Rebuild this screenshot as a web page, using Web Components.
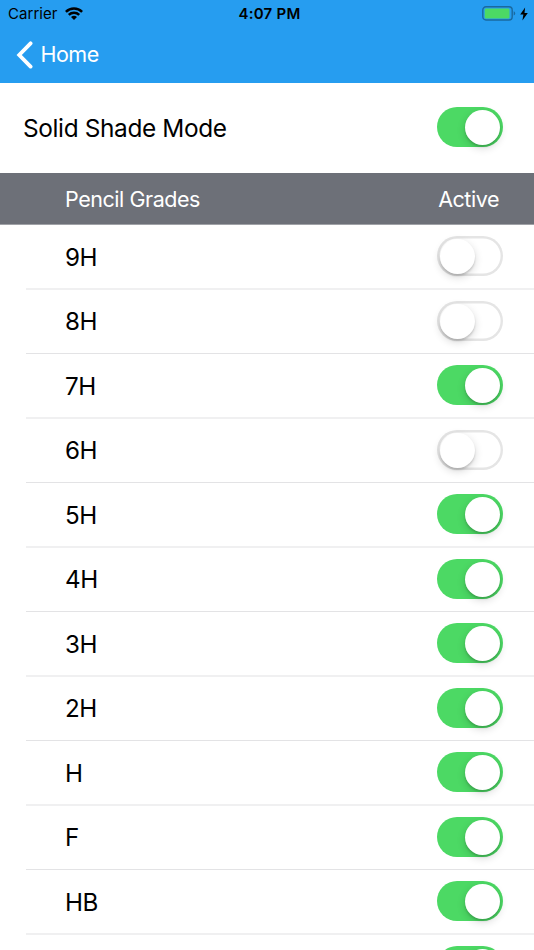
<!DOCTYPE html>
<html lang="en">
<head>
<meta charset="utf-8">
<title>Pencil Grades</title>
<style>
  html, body {
    margin: 0;
    height: 100%;
    overflow: hidden;
    background: #fff;
  }
  body {
    font-family: Inter, "Liberation Sans", sans-serif;
    color: #000;
  }
</style>
</head>
<body>
<grades-screen></grades-screen>

<script>
class StatusBar extends HTMLElement {
    constructor() {
        super();
        this.attachShadow({ mode: 'open' });
    }

    connectedCallback() {
        this.shadowRoot.innerHTML = `
            <style>
                :host {
                    display: grid;
                    grid-template-columns: 1fr auto 1fr;
                    align-items: center;
                    height: 27px;
                    padding: 0 6px 0 8px;
                    font-size: 15px;
                    line-height: 27px;
                }
                .left, .right {
                    display: flex;
                    align-items: center;
                }
                .left { gap: 7px; letter-spacing: 0.05px; }
                .right { justify-content: flex-end; gap: 4px; }
                .time { font-weight: 600; letter-spacing: 0.25px; padding-left: 3px; }
                svg { display: block; }
            </style>
            <div class="left">
                <span>Carrier</span>
                <svg width="18" height="14" viewBox="0 0 18 14" fill="none" stroke="#000" stroke-width="2.5">
                    <path d="M.9 4.8a11.6 11.6 0 0 1 16.2 0"/>
                    <path d="M3.8 7.9a7.4 7.4 0 0 1 10.4 0"/>
                    <path d="M9 13 6 10.1a4.3 4.3 0 0 1 6 0z" fill="#000" stroke="none"/>
                </svg>
            </div>
            <span class="time">4:07 PM</span>
            <div class="right">
                <svg width="34" height="15" viewBox="0 0 34 15">
                    <rect x=".8" y=".8" width="29.4" height="13.2" rx="3.2" fill="none" stroke="#1a699f" stroke-width="1.4"/>
                    <rect x="2.7" y="2.6" width="24.8" height="9.8" rx="1.2" fill="#4cd964"/>
                    <path d="M31.7 5.2q1.5.6 1.5 2.2t-1.5 2.2z" fill="#1a699f"/>
                </svg>
                <svg width="8" height="14" viewBox="0 0 8 14"><path d="M5.1.5.2 7.6h3.2L2.4 13.5 7.8 6H4.5z"/></svg>
            </div>
        `;
    }
}

class NavBar extends HTMLElement {
    constructor() {
        super();
        this.attachShadow({ mode: 'open' });
    }

    connectedCallback() {
        this.shadowRoot.innerHTML = `
            <style>
                :host {
                    display: flex;
                    align-items: center;
                    gap: 7.5px;
                    height: 56px;
                    padding-left: 16px;
                    color: #fff;
                    font-size: 21.5px;
                    letter-spacing: -0.5px;
                }
                svg { display: block; }
                span { padding-bottom: 2px; }
            </style>
            <svg width="17" height="28" viewBox="0 0 17 28" fill="none" stroke="#fff" stroke-width="3.8" stroke-linecap="round" stroke-linejoin="miter">
                <path d="M14.6 2.3 3.2 14l11.4 11.6"/>
            </svg>
            <span><slot></slot></span>
        `;
    }
}

class ToggleSwitch extends HTMLElement {
    constructor() {
        super();
        this.attachShadow({ mode: 'open' });
    }

    connectedCallback() {
        this.shadowRoot.innerHTML = `
            <style>
                :host {
                    display: flex;
                    flex: none;
                    align-items: center;
                    box-sizing: border-box;
                    width: 66px;
                    height: 40px;
                    padding: 0 3px 0 2.5px;
                    border-radius: 20px;
                    background: #fff;
                    box-shadow: inset 0 0 0 2.4px #e5e5e5;
                }
                :host([on]) {
                    justify-content: flex-end;
                    background: #4cd964;
                    box-shadow: none;
                }
                .knob {
                    width: 35px;
                    height: 35px;
                    border-radius: 50%;
                    background: #fff;
                    box-shadow: 0 3px 9px rgba(0, 0, 0, .16), 0 2px 2px rgba(0, 0, 0, .14);
                }
            </style>
            <div class="knob"></div>
        `;
    }
}

class SettingRow extends HTMLElement {
    constructor() {
        super();
        this.attachShadow({ mode: 'open' });
    }

    connectedCallback() {
        this.shadowRoot.innerHTML = `
            <style>
                :host {
                    display: flex;
                    align-items: center;
                    justify-content: space-between;
                    box-sizing: border-box;
                    height: 90px;
                    padding: 0 31px 2px 23px;
                    font-size: 24.4px;
                    letter-spacing: -0.36px;
                }
                span { padding-top: 2px; }
            </style>
            <span><slot></slot></span>
            <toggle-switch ${this.hasAttribute('on') ? 'on' : ''}></toggle-switch>
        `;
    }
}

class ListHeader extends HTMLElement {
    constructor() {
        super();
        this.attachShadow({ mode: 'open' });
    }

    connectedCallback() {
        this.shadowRoot.innerHTML = `
            <style>
                :host {
                    display: flex;
                    align-items: center;
                    justify-content: space-between;
                    box-sizing: border-box;
                    height: 52px;
                    padding: 1px 35px 0 65px;
                    border-bottom: 1px solid #a0a2a7;
                    background: #6d7078;
                    color: #fff;
                    font-size: 21.5px;
                    letter-spacing: -0.45px;
                }
            </style>
            <span><slot></slot></span>
            <span><slot name="state"></slot></span>
        `;
    }
}

class GradeRow extends HTMLElement {
    constructor() {
        super();
        this.attachShadow({ mode: 'open' });
    }

    connectedCallback() {
        // the row pitch is 64.5px: separators alternate between a soft 2px and a crisp 1px line
        this.shadowRoot.innerHTML = `
            <style>
                :host {
                    display: flex;
                    align-items: center;
                    justify-content: space-between;
                    box-sizing: border-box;
                    height: 65px;
                    margin-left: 26px;
                    padding: 0 31px 1px 39px;
                    border-bottom: 2px solid #f0f0f1;
                    font-size: 24.2px;
                    letter-spacing: -0.5px;
                }
                :host(:nth-child(even)) {
                    height: 64px;
                    border-bottom: 1px solid #e3e3e5;
                }
                span { padding-top: 2px; }
                :host(:nth-child(even)) span { padding-top: 0; }
            </style>
            <span><slot></slot></span>
            <toggle-switch ${this.hasAttribute('on') ? 'on' : ''}></toggle-switch>
        `;
    }
}

class GradesScreen extends HTMLElement {
    constructor() {
        super();
        this.attachShadow({ mode: 'open' });
        this.grades = [
            ['9H', false], ['8H', false], ['7H', true], ['6H', false],
            ['5H', true], ['4H', true], ['3H', true], ['2H', true],
            ['H', true], ['F', true], ['HB', true], ['', true]
        ];
    }

    connectedCallback() {
        const rows = this.grades
            .map(([name, on]) => `<grade-row ${on ? 'on' : ''}>${name}</grade-row>`)
            .join('');

        this.shadowRoot.innerHTML = `
            <style>
                :host {
                    display: block;
                    height: 100vh;
                    overflow: hidden;
                }
                header { background: #269df0; }
            </style>
            <header>
                <status-bar></status-bar>
                <nav-bar>Home</nav-bar>
            </header>
            <setting-row on>Solid Shade Mode</setting-row>
            <list-header>Pencil Grades<span slot="state">Active</span></list-header>
            <main>${rows}</main>
        `;
    }
}

customElements.define('status-bar', StatusBar);
customElements.define('nav-bar', NavBar);
customElements.define('toggle-switch', ToggleSwitch);
customElements.define('setting-row', SettingRow);
customElements.define('list-header', ListHeader);
customElements.define('grade-row', GradeRow);
customElements.define('grades-screen', GradesScreen);
</script>
</body>
</html>
